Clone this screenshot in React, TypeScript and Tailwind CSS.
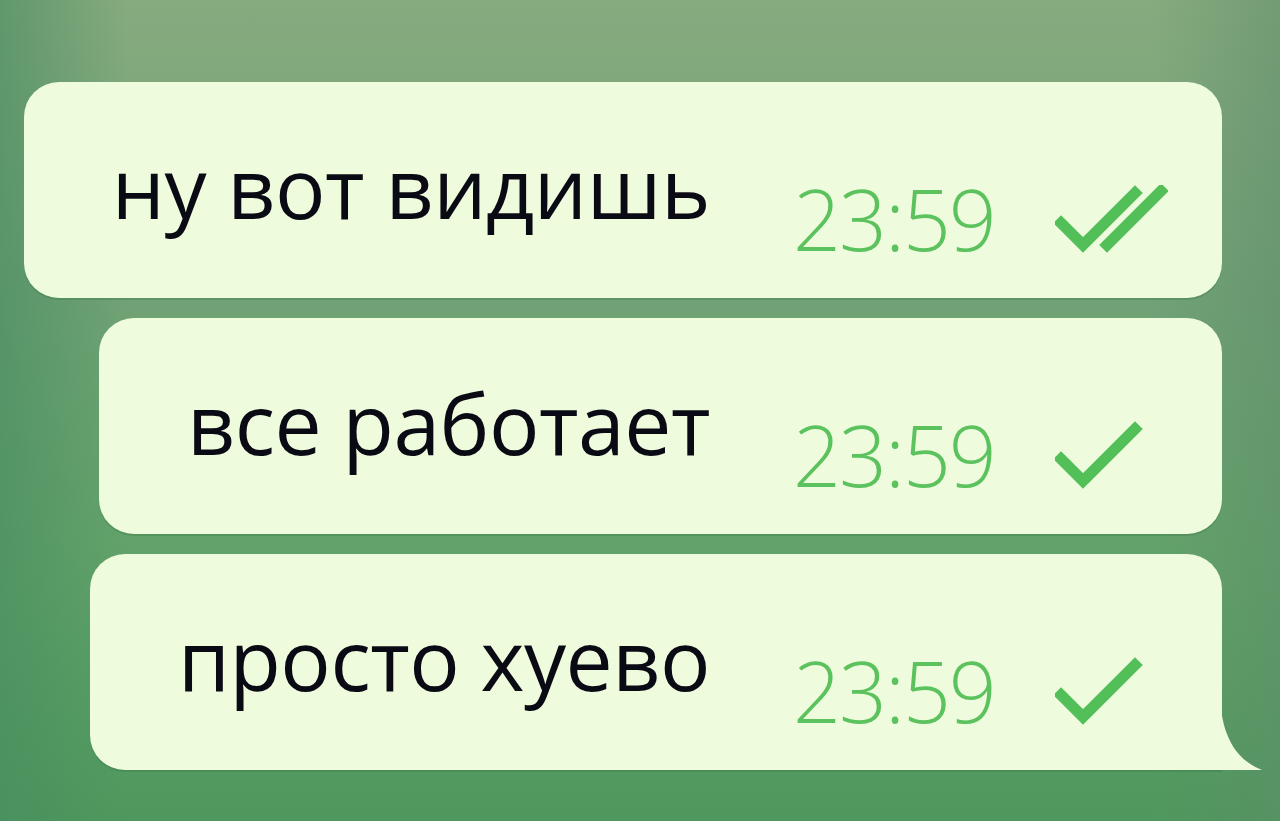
import type { ReactNode } from 'react'

type Msg = { id: number; text: string; time: string; read: boolean; tail?: boolean }

const messages: Msg[] = [
  { id: 1, text: 'ну вот видишь', time: '23:59', read: true },
  { id: 2, text: 'все работает', time: '23:59', read: false },
  { id: 3, text: 'просто хуево', time: '23:59', read: false, tail: true },
]

function Check({ double }: { double: boolean }) {
  return (
    <svg width="113" height="70" viewBox="0 0 113 70" fill="none" className="mt-[8px] shrink-0">
      <path d="M6 38 L28 60 L80 8" stroke="#52bf58" strokeWidth="11" strokeLinecap="square" />
      {double && <path d="M52 60 L106 6" stroke="#52bf58" strokeWidth="11" strokeLinecap="square" />}
    </svg>
  )
}

function Bubble({ msg, children }: { msg: Msg; children?: ReactNode }) {
  return (
    <div
      className={`relative flex h-[216px] bg-[#eefcdd] pl-[88px] pr-[54px] shadow-[0_2px_0_rgba(60,120,70,0.35)] ${
        msg.tail ? 'rounded-[35px] rounded-br-none' : 'rounded-[35px]'
      }`}
    >
      <span className="pt-[63px] text-[84px] leading-none tracking-[-0.5px] text-[#0a0a14] whitespace-nowrap">
        {msg.text}
      </span>
      <div className="ml-[83px] flex items-start pt-[95px]">
        <span className="w-[200px] text-[84px] font-light leading-none tracking-[-2px] text-[#5cc25e]">{msg.time}</span>
        <div className="ml-[62px]">
          <Check double={msg.read} />
        </div>
      </div>
      {msg.tail && (
        <svg width="42" height="72" viewBox="0 0 42 72" className="absolute -right-[40px] bottom-0">
          <path d="M0 0 C2 38 16 62 42 72 L0 72 Z" fill="#eefcdd" />
        </svg>
      )}
      {children}
    </div>
  )
}

export default function App() {
  return (
    <div
      className="relative h-[821px] w-[1280px] overflow-hidden bg-[linear-gradient(180deg,#87aa7f_0%,#72a276_35%,#61a269_70%,#4e985d_100%)]"
      style={{ fontFamily: '"Open Sans", sans-serif' }}
    >
      <div className="absolute inset-0 bg-[linear-gradient(90deg,rgba(70,140,95,0.6)_0%,rgba(0,0,0,0)_10%,rgba(0,0,0,0)_90%,rgba(95,140,105,0.5)_100%)]" />
      <div className="relative flex flex-col items-end gap-[20px] pt-[82px] pr-[58px]">
        {messages.map((m) => (
          <Bubble key={m.id} msg={m} />
        ))}
      </div>
    </div>
  )
}
